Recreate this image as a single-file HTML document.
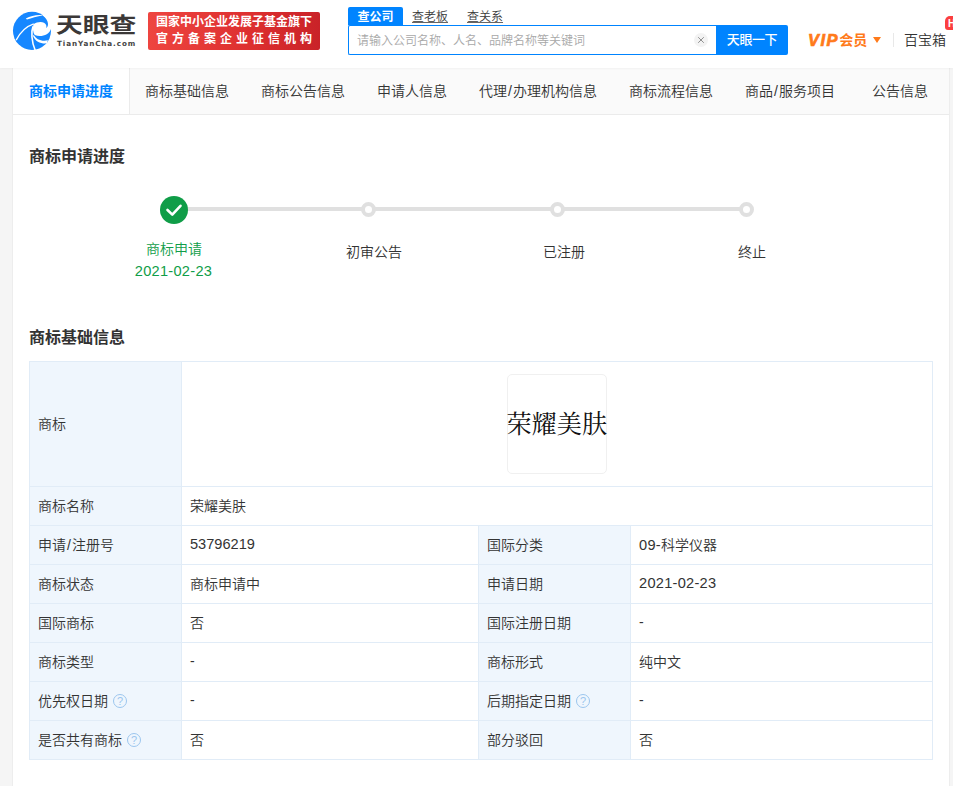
<!DOCTYPE html>
<html lang="zh-CN">
<head>
<meta charset="utf-8">
<title>商标详情</title>
<style>
*{box-sizing:border-box;margin:0;padding:0}
html,body{width:953px;height:786px;overflow:hidden}
body{background:#f5f5f5;font-weight:350;font-family:"Liberation Sans","Noto Sans CJK SC",sans-serif;font-size:14px;color:#333;position:relative}
.abs{position:absolute;white-space:nowrap}
/* header */
#hd{position:absolute;left:0;top:0;width:953px;height:68px;background:#fff;box-shadow:0 1px 2px rgba(0,0,0,.035);z-index:2}
#logo-txt{left:56.2px;top:8.5px;font-size:21px;line-height:32px;font-weight:bold;color:#3b3837;letter-spacing:0;transform:scaleX(1.275);transform-origin:0 0}
#logo-sub{left:57px;top:37.6px;font-family:"DejaVu Sans","Liberation Sans",sans-serif;font-size:7.2px;line-height:12px;font-weight:bold;color:#444;letter-spacing:0.9px}
#banner{left:148px;top:12px;width:172px;height:37.5px;border-radius:2px;background:linear-gradient(90deg,#ee4540 0%,#dd2f2f 60%,#c92228 100%);color:#fff;font-weight:bold;font-size:12px}
#banner span{position:absolute;left:8px;white-space:nowrap;line-height:14px}
#b1{top:2.5px;letter-spacing:0}
#b2{top:19.5px;letter-spacing:4px}
.stab{top:7px;height:18px;line-height:20px;font-size:12px;color:#3a3a3a}
#st1{left:348px;width:55px;background:#0084ff;color:#fff;text-align:center;font-weight:bold;border-radius:2px 2px 0 0}
#st2{left:412px;text-decoration:underline;text-decoration-thickness:1px;text-underline-offset:0.5px;text-decoration-color:#666}
#st3{left:467px;text-decoration:underline;text-decoration-thickness:1px;text-underline-offset:0.5px;text-decoration-color:#666}
#sbox{left:348px;top:25px;width:369px;height:30px;border:1px solid #0084ff;border-right:none;background:#fff;border-radius:2px 0 0 2px}
#sph{left:357px;top:33px;font-size:12px;line-height:16px;color:#a8a8a8}
#sclr{left:694px;top:33px;width:14px;height:14px;border-radius:50%;background:#f3f3f3}
#sbtn{left:716px;top:25px;width:72px;height:30px;background:#0084ff;color:#fff;font-size:13px;font-weight:500;text-align:center;line-height:30px;border-radius:0 2px 2px 0;letter-spacing:-0.4px}
#vip{left:808px;top:29px;font-size:14px;line-height:20px;font-weight:bold;color:#ff7a1a}
#vip i{font-style:italic;font-size:16.5px;letter-spacing:1.4px;-webkit-text-stroke:0.7px #ff7a1a;margin-right:0.5px;position:relative;top:1px}
#varrow{left:873px;top:37px;width:0;height:0;border-left:4px solid transparent;border-right:4px solid transparent;border-top:6px solid #ff7a1a}
#vsep{left:893px;top:33px;width:1px;height:14px;background:#e8e8e8}
#bbx{left:904px;top:30px;font-size:14px;line-height:20px;color:#333}
#hot{left:945px;top:15.5px;width:14px;height:14px;background:#fb3f3f;border-radius:5px 0 0 3px;color:#fff;font-size:10px;font-weight:bold;line-height:15px;padding-left:3px;overflow:hidden}
/* panel */
#panel{position:absolute;left:12px;top:68px;width:938px;height:718px;background:#fff;border-left:1px solid #ededed;border-right:1px solid #ededed}
#tabs{position:absolute;left:0;top:0;width:936px;height:47px;background:#fafafa;border-bottom:1px solid #ebebeb}
#tab1{position:absolute;left:0;top:0;width:117px;height:47px;background:#fff;border-right:1px solid #ebebeb;border-bottom:1px solid #ebebeb}
.tab{top:83px;line-height:16px;font-size:14px;color:#333}
.h2{left:29px;font-size:16px;line-height:22px;font-weight:bold;color:#333}
/* progress */
#pline{left:174px;top:207px;width:573px;height:4px;background:#e0e0e0}
.dot{top:202px;width:15px;height:15px;border-radius:50%;border:4px solid #e0e0e0;background:#fff}
#done{left:159.7px;top:195.5px;width:28.2px;height:28.2px;border-radius:50%;background:#109d48}
.plab{font-size:14px;line-height:18px;color:#333;text-align:center}
.g{color:#109d48}
/* table */
#tb{position:absolute;left:29px;top:361px;width:903px;border-collapse:collapse;table-layout:fixed;font-size:14px}
#tb td{border:1px solid #e1ecf7;height:39px;padding:0 8px 2px;color:#333;vertical-align:middle;background:#fff;white-space:nowrap}
#tb td.l{background:#eff6fd}
.q{display:inline-block;width:14px;height:14px;border:1px solid #9cc6ee;border-radius:50%;color:#9cc6ee;font-size:11px;line-height:12px;text-align:center;vertical-align:0.5px;margin-left:5px;position:relative;top:-1px;font-weight:normal}
.n{font-size:14.6px;letter-spacing:0;line-height:16px}
.nd{font-size:14.6px;letter-spacing:0.27px;line-height:16px}
#tmimg{position:absolute;left:325px;top:12px;width:100px;height:100px;border:1px solid #f0f0f0;border-radius:5px;font-family:"Liberation Serif","Noto Serif CJK SC",serif;font-size:25.2px;font-weight:400;line-height:99px;text-align:center;text-indent:-1.6px;color:#111;white-space:nowrap;overflow:visible}
</style>
</head>
<body>
<div id="hd">
  <svg class="abs" style="left:8px;top:6px" width="50" height="50" viewBox="0 0 786 786">
    <circle cx="377" cy="391" r="299" fill="#1687ff"/>
    <path d="M400,287 C470,238 575,238 600,300 C605,315 605,332 600,347 C640,325 652,235 548,150 L560,80 L720,80 L720,365 L673,365 C650,450 520,500 420,457 C392,420 385,350 400,287 Z" fill="#fff"/>
    <path d="M128,537 C190,420 290,320 405,282" stroke="#fff" stroke-width="20" fill="none"/>
    <path d="M393,320 C362,400 368,560 428,695" stroke="#fff" stroke-width="25" fill="none"/>
    <path d="M405,450 C440,520 520,560 628,540 L612,587 C520,597 430,560 393,470 Z" fill="#fff"/>
    <path d="M280,198 C360,156 450,134 556,146 C450,166 370,188 298,214 Z" fill="#fff"/>
  </svg>
  <div class="abs" id="logo-txt">天眼查</div>
  <div class="abs" id="logo-sub">TianYanCha.com</div>
  <div class="abs" id="banner"><span id="b1">国家中小企业发展子基金旗下</span><span id="b2">官方备案企业征信机构</span></div>
  <div class="abs stab" id="st1">查公司</div>
  <div class="abs stab" id="st2">查老板</div>
  <div class="abs stab" id="st3">查关系</div>
  <div class="abs" id="sbox"></div>
  <div class="abs" id="sph">请输入公司名称、人名、品牌名称等关键词</div>
  <div class="abs" id="sclr"><svg width="14" height="14" viewBox="0 0 14 14"><path d="M4.2 4.2 L9.8 9.8 M9.8 4.2 L4.2 9.8" stroke="#909090" stroke-width="1" fill="none"/></svg></div>
  <div class="abs" id="sbtn">天眼一下</div>
  <div class="abs" id="vip"><i>VIP</i>会员</div>
  <div class="abs" id="varrow"></div>
  <div class="abs" id="vsep"></div>
  <div class="abs" id="bbx">百宝箱</div>
  <div class="abs" id="hot">H</div>
</div>

<div id="panel">
  <div id="tabs"><div id="tab1"></div></div>
</div>

<div class="abs tab" style="left:29px;color:#0084ff;font-weight:bold">商标申请进度</div>
<div class="abs tab" style="left:145px">商标基础信息</div>
<div class="abs tab" style="left:261px">商标公告信息</div>
<div class="abs tab" style="left:377px">申请人信息</div>
<div class="abs tab" style="left:479px">代理<span style="margin:0 1px">/</span>办理机构信息</div>
<div class="abs tab" style="left:629px">商标流程信息</div>
<div class="abs tab" style="left:745px">商品<span style="margin:0 1px">/</span>服务项目</div>
<div class="abs tab" style="left:872px">公告信息</div>

<div class="abs h2" style="top:146px">商标申请进度</div>

<div class="abs" id="pline"></div>
<div class="abs" id="done"><svg width="28" height="28" viewBox="0 0 28 28"><path d="M7.5 14 L12.3 18.6 L20.5 9.8" stroke="#fff" stroke-width="2.6" fill="none" stroke-linecap="round" stroke-linejoin="round"/></svg></div>
<div class="abs dot" style="left:361px"></div>
<div class="abs dot" style="left:550px"></div>
<div class="abs dot" style="left:739px"></div>
<div class="abs plab g" style="left:146px;top:240px;width:56px">商标申请</div>
<div class="abs plab g" style="left:123.5px;top:261.5px;width:100px;font-size:14.6px;letter-spacing:0.27px">2021-02-23</div>
<div class="abs plab" style="left:346px;top:243px;width:56px">初审公告</div>
<div class="abs plab" style="left:543px;top:243px;width:42px">已注册</div>
<div class="abs plab" style="left:738px;top:243px;width:28px">终止</div>

<div class="abs h2" style="top:327px">商标基础信息</div>

<table id="tb">
<colgroup><col style="width:152px"><col style="width:297px"><col style="width:152px"><col style="width:302px"></colgroup>
<tr><td class="l" style="height:125px">商标</td><td colspan="3" style="position:relative;height:125px;padding:0"><div style="position:relative;width:100%;height:124px"><div id="tmimg">荣耀美肤</div></div></td></tr>
<tr><td class="l">商标名称</td><td colspan="3">荣耀美肤</td></tr>
<tr><td class="l">申请<span style="margin:0 1px">/</span>注册号</td><td><span class="n">53796219</span></td><td class="l">国际分类</td><td><span class="nd">09-</span>科学仪器</td></tr>
<tr><td class="l">商标状态</td><td>商标申请中</td><td class="l">申请日期</td><td><span class="nd">2021-02-23</span></td></tr>
<tr><td class="l">国际商标</td><td>否</td><td class="l">国际注册日期</td><td>-</td></tr>
<tr><td class="l">商标类型</td><td>-</td><td class="l">商标形式</td><td>纯中文</td></tr>
<tr><td class="l">优先权日期<span class="q">?</span></td><td>-</td><td class="l">后期指定日期<span class="q">?</span></td><td>-</td></tr>
<tr><td class="l">是否共有商标<span class="q">?</span></td><td>否</td><td class="l">部分驳回</td><td>否</td></tr>
</table>
</body>
</html>
